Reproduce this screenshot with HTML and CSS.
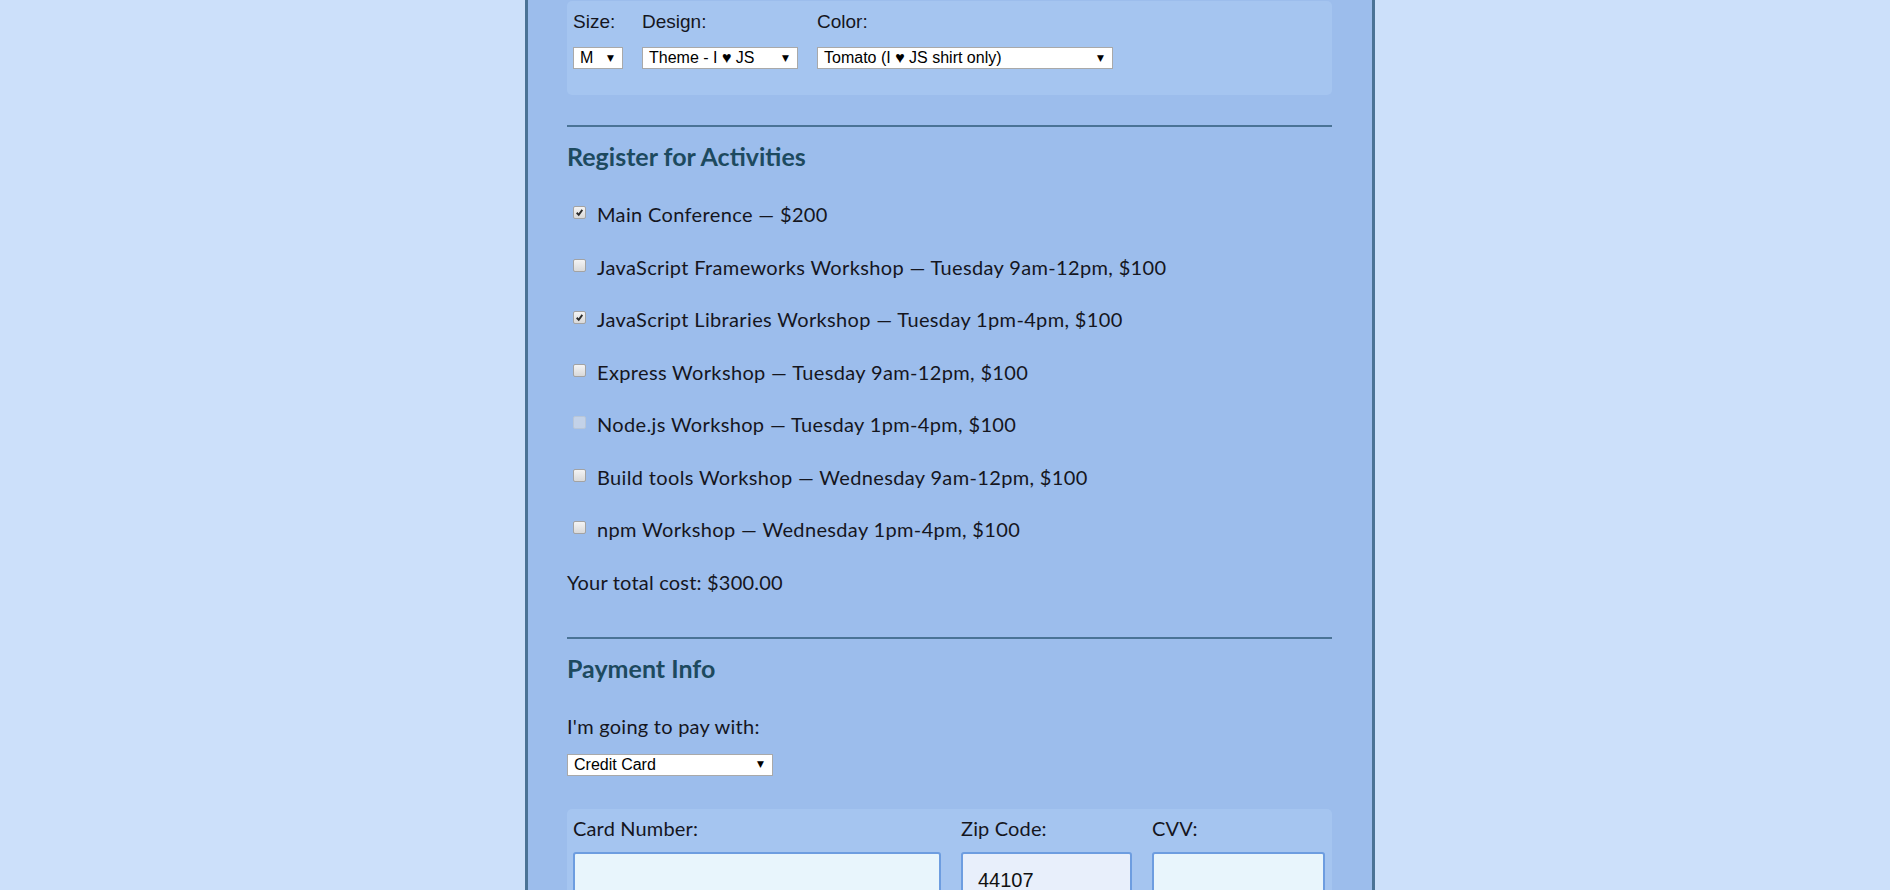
FILE: index.html
```html
<!DOCTYPE html>
<html lang="en">
<head>
<meta charset="utf-8">
<title>Register</title>
<link rel="stylesheet" href="styles.css">
</head>
<body>
<div class="page">
  <form class="container">
    <div class="shirt-box">
      <div class="shirt-col">
        <span class="shirt-label">Size:</span>
        <div class="select w-size"><span class="select-text">M</span><span class="arrow">▼</span></div>
      </div>
      <div class="shirt-col">
        <span class="shirt-label">Design:</span>
        <div class="select w-design"><span class="select-text">Theme - I ♥ JS</span><span class="arrow">▼</span></div>
      </div>
      <div class="shirt-col">
        <span class="shirt-label">Color:</span>
        <div class="select w-color"><span class="select-text">Tomato (I ♥ JS shirt only)</span><span class="arrow">▼</span></div>
      </div>
    </div>

    <hr class="rule">
    <h2 class="section-title">Register for Activities</h2>
    <div class="activities">
      <label class="activity"><span class="cb"><svg viewBox="0 0 13 13"><path d="M3.2 6.8 L5.6 9.2 L9.8 3.4" /></svg></span>Main Conference — $200</label>
      <label class="activity"><span class="cb"></span>JavaScript Frameworks Workshop — Tuesday 9am-12pm, $100</label>
      <label class="activity"><span class="cb"><svg viewBox="0 0 13 13"><path d="M3.2 6.8 L5.6 9.2 L9.8 3.4" /></svg></span>JavaScript Libraries Workshop — Tuesday 1pm-4pm, $100</label>
      <label class="activity"><span class="cb"></span>Express Workshop — Tuesday 9am-12pm, $100</label>
      <label class="activity"><span class="cb cb-disabled"></span>Node.js Workshop — Tuesday 1pm-4pm, $100</label>
      <label class="activity"><span class="cb"></span>Build tools Workshop — Wednesday 9am-12pm, $100</label>
      <label class="activity"><span class="cb"></span>npm Workshop — Wednesday 1pm-4pm, $100</label>
      <p class="total">Your total cost: $300.00</p>
    </div>

    <hr class="rule">
    <h2 class="section-title">Payment Info</h2>
    <p class="pay-label">I'm going to pay with:</p>
    <div class="select w-pay"><span class="select-text">Credit Card</span><span class="arrow">▼</span></div>

    <div class="card-box">
      <div class="card-col">
        <span class="card-label">Card Number:</span>
        <div class="text-input"></div>
      </div>
      <div class="card-col">
        <span class="card-label">Zip Code:</span>
        <div class="text-input zip">44107</div>
      </div>
      <div class="card-col">
        <span class="card-label">CVV:</span>
        <div class="text-input"></div>
      </div>
    </div>
  </form>
</div>
</body>
</html>
```

FILE: styles.css
```css
html, body {
  margin: 0;
  padding: 0;
  height: 100%;
  overflow: hidden;
}

body {
  background: #cce0fa;
  font-family: Lato, "Noto Sans", sans-serif;
  color: #15161e;
}

.page {
  padding-left: 10px;
  height: 100%;
}

.container {
  box-sizing: border-box;
  width: 850px;
  min-height: 100%;
  margin: 0 auto;
  background: #9cbdec;
  border-left: 3px solid #4a7396;
  border-right: 3px solid #4a7396;
  padding: 1px 40px 0 39px;
}

/* T-shirt box */
.shirt-box {
  display: flex;
  gap: 19px;
  background: #a5c5f0;
  border-radius: 5px;
  padding: 10px 6px 26px;
}

.shirt-col {
  display: flex;
  flex-direction: column;
}

.shirt-label {
  font-family: "Liberation Sans", Arial, sans-serif;
  font-size: 19px;
  line-height: 21px;
  margin-bottom: 15px;
  color: #15161e;
}

.select {
  box-sizing: border-box;
  display: flex;
  align-items: center;
  justify-content: space-between;
  height: 22px;
  background: #fff;
  border: 1px solid #a9a9a9;
  padding: 0 8px 0 6px;
  font-family: "Liberation Sans", Arial, "DejaVu Sans", sans-serif;
  font-size: 16px;
  color: #000;
  white-space: nowrap;
}

.arrow {
  font-family: "DejaVu Sans", sans-serif;
  font-size: 9px;
  line-height: 1;
}

.w-size { width: 50px; }
.w-design { width: 156px; }
.w-color { width: 296px; }
.w-pay { width: 206px; }

/* rules and titles */
.rule {
  border: 0;
  height: 2px;
  background: #4a7396;
  margin: 30px 0 0;
}

.section-title {
  font-family: Lato, "Noto Sans", sans-serif;
  font-weight: 700;
  font-size: 25px;
  line-height: 32px;
  color: #1d4a5f;
  margin: 13px 0 26px;
}

/* activities */
.activity {
  display: block;
  font-size: 20px;
  line-height: 32.5px;
  letter-spacing: 0.35px;
  margin-bottom: 20px;
  white-space: nowrap;
}

.cb {
  display: inline-block;
  box-sizing: border-box;
  width: 13px;
  height: 13px;
  margin: 0 11px 3px 6px;
  border: 1px solid #a3a3a3;
  border-radius: 2px;
  background: linear-gradient(#f4f4f4, #d9d9d9);
  vertical-align: baseline;
}

.cb svg {
  display: block;
  width: 11px;
  height: 11px;
}

.cb svg path {
  fill: none;
  stroke: #2a2a2a;
  stroke-width: 2.2;
}

.cb-disabled {
  border-color: #b8c6d8;
  background: #c3d2e8;
}

.total {
  font-size: 20px;
  line-height: 32.5px;
  letter-spacing: 0.2px;
  margin: 0 0 39px;
}

/* payment */
.pay-label {
  font-size: 20px;
  line-height: 32.5px;
  letter-spacing: 0.25px;
  margin: 0 0 11px;
}

.card-box {
  display: grid;
  grid-template-columns: 368px 171px 173px;
  column-gap: 20px;
  background: #a5c5f0;
  border-radius: 5px;
  margin-top: 33px;
  padding: 7px 6px 30px;
}

.card-col {
  display: flex;
  flex-direction: column;
}

.card-label {
  font-size: 20px;
  line-height: 24px;
  letter-spacing: 0.15px;
  margin-bottom: 12px;
}

.text-input {
  box-sizing: border-box;
  height: 57px;
  border: 2px solid #6d9de0;
  border-radius: 3px;
  background: #e8f5fc;
  padding: 15px 15px;
  font-family: "Liberation Sans", Arial, sans-serif;
  font-size: 20px;
  line-height: 23px;
  color: #111;
}

.text-input.zip {
  background: #e8effb;
}
```
